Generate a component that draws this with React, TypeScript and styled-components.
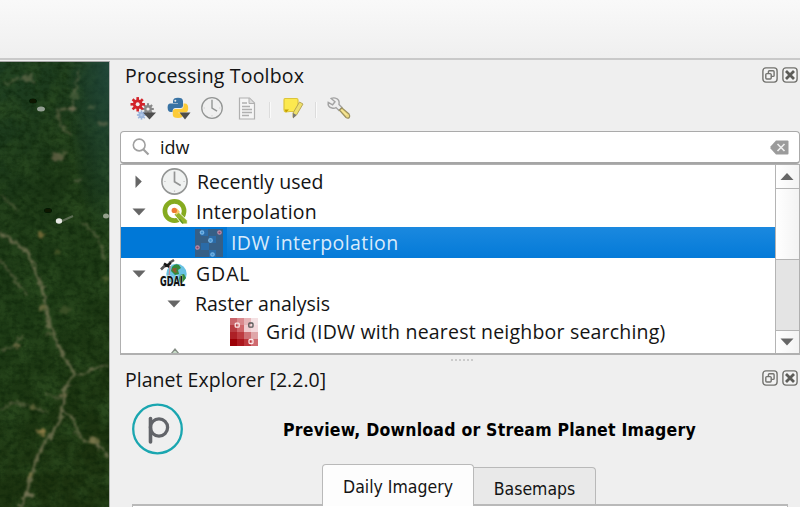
import React from 'react';
import styled, { createGlobalStyle } from 'styled-components';

const ui = '"Open Sans", "Noto Sans", sans-serif';
const tahoma = '"DejaVu Sans Condensed", "DejaVu Sans", sans-serif';

const GlobalStyle = createGlobalStyle`
  * { box-sizing: border-box; }
  body { margin: 0; background: #fff; overflow: hidden; }
  svg { display: block; flex: none; overflow: visible; }
`;

const Window = styled.div`
  width: 800px;
  height: 507px;
  display: flex;
  flex-direction: column;
  overflow: hidden;
  background: #efefef;
  color: #141414;
  font-family: ${ui};
`;

const ToolbarArea = styled.div`
  flex: none;
  height: 60px;
  background: linear-gradient(#f9f9f9, #efefef);
  border-bottom: 2px solid #c9c9c9;
`;

const Workspace = styled.div`
  flex: 1;
  display: flex;
  min-height: 0;
`;

const MapCanvas = styled.div`
  flex: none;
  width: 110px;
  height: 446px;
  margin-top: 1px;
  border-top: 1px solid #a5a5a5;
  border-right: 1px solid #b5b5b5;
  overflow: hidden;
`;

const Docks = styled.div`
  flex: 1;
  min-width: 0;
  display: flex;
  flex-direction: column;
  padding-left: 10px;
`;

const DockTitle = styled.div<{ $h: number }>`
  flex: none;
  height: ${p => p.$h}px;
  display: flex;
  align-items: center;
  padding: 0 2px 1px 5px;
`;

const DockButtons = styled.div`
  margin-left: auto;
  display: flex;
  gap: 4px;
  margin-bottom: 3px;
`;

const Label = styled.span<{ $size?: number; $space?: number }>`
  font-size: ${p => p.$size ?? 19.5}px;
  letter-spacing: ${p => p.$space ?? 0}px;
  line-height: 26px;
  white-space: nowrap;
`;

const Tools = styled.div`
  flex: none;
  height: 38px;
  display: flex;
  align-items: flex-start;
  padding: 4px 0 0 10px;
`;

const Separator = styled.i`
  width: 2px;
  height: 16px;
  margin: 5px 10px 0 10px;
  background: linear-gradient(90deg, #dcdcdc 50%, #fafafa 50%);
`;

const Gap = styled.i<{ $w: number }>`
  flex: none;
  width: ${p => p.$w}px;
`;

const SearchBox = styled.div`
  flex: none;
  height: 33px;
  display: flex;
  align-items: center;
  padding: 0 10px 0 11px;
  background: #fff;
  border: 1px solid #aaa;
  border-bottom: 2px solid #a5a5a5;
  border-radius: 4px;
`;

const SearchAction = styled.div`
  margin-left: auto;
`;

const TreeFrame = styled.div`
  flex: none;
  height: 191px;
  display: flex;
  border: 1px solid #b0b0b0;
  border-bottom-width: 2px;
  background: #fff;
`;

const TreeRows = styled.div`
  flex: 1;
  min-width: 0;
  overflow: hidden;
  padding-top: 1px;
`;

const TreeRow = styled.div<{ $h: number; $indent: number; $selected?: boolean }>`
  height: ${p => p.$h}px;
  display: flex;
  align-items: center;
  padding-left: ${p => p.$indent}px;
  padding-top: ${p => (p.$selected ? 1 : 0)}px;
  color: ${p => (p.$selected ? '#d9ebfb' : 'inherit')};
  background: ${p => (p.$selected
    ? 'linear-gradient(90deg, #0078d7 106px, transparent 106px), linear-gradient(#1b89df, #047ad8)'
    : 'none')};
`;

const ScrollBar = styled.div`
  flex: none;
  width: 24px;
  display: flex;
  flex-direction: column;
  border-left: 1px solid #b4b4b4;
  background: #e4e4e4;
`;

const ScrollPart = styled.div<{ $h: number }>`
  height: ${p => p.$h}px;
  display: flex;
  align-items: center;
  justify-content: center;
  padding-right: 1px;
  border-bottom: 1px solid #b4b4b4;
  background: linear-gradient(90deg, #fff, #f3f3f3);
`;

const ScrollEnd = styled(ScrollPart)`
  margin-top: auto;
  border-bottom: 0;
  border-top: 1px solid #b4b4b4;
`;

const Splitter = styled.div`
  flex: none;
  height: 11px;
  display: flex;
  gap: 2px;
  justify-content: center;
  padding: 4px 0 0 4px;
`;

const Dot = styled.i`
  width: 2px;
  height: 2px;
  background: #cbcbcb;
`;

const Banner = styled.div`
  flex: none;
  height: 70px;
  display: flex;
  align-items: flex-start;
  padding: 10px 0 0 12px;
`;

const BannerText = styled.strong`
  margin: 13px 0 0 99px;
  font: 700 17.5px/26px ${tahoma};
  font-stretch: condensed;
  letter-spacing: 0.22px;
  color: #000;
  white-space: nowrap;
`;

const TabBar = styled.div`
  flex: none;
  height: 40px;
  display: flex;
  align-items: flex-end;
  padding-left: 202px;
`;

const Tab = styled.div<{ $w: number; $h: number; $active?: boolean }>`
  width: ${p => p.$w}px;
  height: ${p => p.$h}px;
  display: flex;
  align-items: center;
  justify-content: center;
  padding-top: 5px;
  border: 1.5px solid #b9b9b9;
  border-bottom: 0;
  border-left-width: ${p => (p.$active ? 1.5 : 0)}px;
  border-radius: ${p => (p.$active ? '4px 4px 0 0' : '0 4px 0 0')};
  background: ${p => (p.$active ? '#fdfdfd' : '#e9e9e9')};
  font: 17.5px/24px ${tahoma};
  font-stretch: condensed;
  letter-spacing: 0;
  white-space: nowrap;
`;

const PaneEdge = styled.div`
  flex: none;
  display: grid;
  grid-template-columns: 190px 150px 1fr;
  height: 3px;
  margin: 0 12px 0 12px;
  border-left: 1px solid #b9b9b9;
  border-right: 1px solid #b9b9b9;
  background: #fff;
`;

const Edge = styled.i<{ $on?: boolean }>`
  height: 2px;
  background: ${p => (p.$on ? '#b9b9b9' : '#fdfdfd')};
`;

const roads = [
  'M0 233 Q10 238 18 245 Q29 252 32 262 L38 277 L42 288 L47 309 L49 325 L54 333 L57 343 L63 354 L68 363 L74 373 L70 381 L65 389 L64 399 L62 411 L59 422 L51 434 L44 443 L38 454 L35 464 L31 476 L28 489 L22 501 L20 507',
  'M73 375 L84 374 L92 369 L108 366',
  'M63 411 L74 419 L77 434 L86 442 L94 440 L102 450 L108 456',
  'M0 195 L8 202 L18 211',
  'M5 84 L14 80 L25 78 L34 82',
  'M78 72 L76 85 L72 97 L73 107',
  'M58 107 L60 124 L65 130 L72 135',
  'M82 223 L93 232 L101 244 L104 260',
  'M0 259 L10 272 L18 284 L28 295',
  'M0 350 L14 347 L22 335',
  'M45 392 L55 398 L63 399',
  'M0 410 L14 403 L32 407 L48 413',
];

const specks: [number, number, number, string][] = [
  [27, 78, 6, '#566344'], [72, 109, 4, '#7c765b'], [63, 109, 3, '#696b4e'], [57, 157, 7, '#666448'],
  [64, 153, 5, '#55603d'], [78, 181, 4, '#566044'], [41, 235, 4, '#80713c'], [57, 253, 3, '#56602e'],
  [103, 124, 5, '#576348'], [92, 107, 4, '#495b40'], [17, 346, 4, '#80774d'], [43, 432, 5, '#a38950'],
  [38, 432, 3, '#817644'], [42, 308, 4, '#757347'], [65, 310, 6, '#41542a'], [94, 440, 5, '#7c784c'],
  [31, 475, 3, '#8c8252'], [29, 495, 5, '#858061'], [33, 407, 4, '#65683d'], [63, 395, 4, '#716d4b'],
  [106, 278, 4, '#515f2f'], [75, 96, 5, '#465c3a'], [49, 333, 4, '#59613d'],
];

const SatelliteMap = () => (
  <svg width="109" height="445" viewBox="0 62 109 445">
    <defs>
      <linearGradient id="forest" x1="0" y1="0" x2="0.2" y2="1">
        <stop offset="0" stopColor="#1d3e22" /><stop offset=".35" stopColor="#1b3615" />
        <stop offset=".6" stopColor="#1d3a15" /><stop offset="1" stopColor="#1c320f" />
      </linearGradient>
      <radialGradient id="haze" cx="1" cy="0" r=".4">
        <stop offset="0" stopColor="#214943" stopOpacity=".75" /><stop offset="1" stopColor="#214943" stopOpacity="0" />
      </radialGradient>
      <filter id="canopy" x="0" y="0" width="100%" height="100%" colorInterpolationFilters="sRGB">
        <feTurbulence type="fractalNoise" baseFrequency=".05 .04" numOctaves="5" seed="8" />
        <feColorMatrix values="0 0 0 0 .19  0 0 0 0 .32  0 0 0 0 .14  2.2 0 0 0 -.8" />
      </filter>
      <filter id="shade" x="0" y="0" width="100%" height="100%" colorInterpolationFilters="sRGB">
        <feTurbulence type="fractalNoise" baseFrequency=".16 .2" numOctaves="3" seed="23" />
        <feColorMatrix values="0 0 0 0 .03  0 0 0 0 .12  0 0 0 0 .02  1.8 0 0 0 -.7" />
      </filter>
      <filter id="rough" x="-20%" y="-5%" width="140%" height="110%" colorInterpolationFilters="sRGB">
        <feTurbulence type="fractalNoise" baseFrequency=".2" numOctaves="2" seed="4" result="n" />
        <feDisplacementMap in="SourceGraphic" in2="n" scale="8" xChannelSelector="R" yChannelSelector="G" />
        <feGaussianBlur stdDeviation=".9" />
      </filter>
      <filter id="soft"><feGaussianBlur stdDeviation=".7" /></filter>
    </defs>
    <rect y="62" width="109" height="445" fill="url(#forest)" />
    <rect y="62" width="109" height="445" filter="url(#canopy)" opacity=".65" />
    <rect y="62" width="109" height="445" filter="url(#shade)" opacity=".6" />
    <rect y="62" width="109" height="445" fill="url(#haze)" />
    <g filter="url(#rough)">
      {roads.map((d, i) => (
        <path key={d} d={d} fill="none" stroke="#7d7b5b" strokeWidth={i === 0 ? 3 : 2.2} opacity={i < 3 ? 0.75 : 0.5} />
      ))}
      {specks.map(([x, y, r, c]) => (
        <ellipse key={`${x}-${y}`} cx={x} cy={y} rx={r} ry={r * 0.6} fill={c} opacity=".8" />
      ))}
    </g>
    <g filter="url(#soft)">
      <ellipse cx="33" cy="101" rx="4" ry="2.5" fill="#071606" />
      <ellipse cx="48" cy="210.5" rx="4" ry="2.5" fill="#071404" />
      <ellipse cx="41" cy="109" rx="4" ry="2.5" fill="#929e91" />
      <ellipse cx="59" cy="221" rx="3.2" ry="2.7" fill="#e8e9e4" />
      <path d="M62 221 L73 216" stroke="#75806b" strokeWidth="2" opacity=".7" />
      <ellipse cx="106" cy="216" rx="3" ry="2.5" fill="#94a08c" />
    </g>
  </svg>
);

const FloatIcon = () => (
  <svg width="16" height="16" viewBox="0 0 16 16" fill="none" stroke="#73736f">
    <rect x=".9" y=".9" width="14.2" height="14.2" rx="3" strokeWidth="1.4" fill="#f3f3f3" />
    <rect x="6.4" y="3.7" width="5.7" height="5.7" rx="1" strokeWidth="1.4" />
    <rect x="3.8" y="6.6" width="5.4" height="5.4" rx="1" strokeWidth="1.4" fill="#f3f3f3" />
  </svg>
);

const CloseIcon = () => (
  <svg width="16" height="16" viewBox="0 0 16 16" fill="none" stroke="#73736f">
    <rect x=".9" y=".9" width="14.2" height="14.2" rx="3" strokeWidth="1.4" fill="#f3f3f3" />
    <path d="M4 4 12 12 M12 4 4 12" strokeWidth="2.8" stroke="#5c5c58" />
  </svg>
);

const teeth = [0, 45, 90, 135];
const Gear = ({ x, y, r, color, hole }: { x: number; y: number; r: number; color: string; hole: string }) => (
  <g transform={`translate(${x} ${y})`}>
    {teeth.map(a => <rect key={a} x={-r * 0.18} y={-r} width={r * 0.36} height={r * 2} fill={color} transform={`rotate(${a})`} />)}
    <circle r={r * 0.67} fill={color} />
    <circle r={r * 0.27} fill={hole} />
  </g>
);

const ModelsIcon = () => (
  <svg width="26" height="24" viewBox="0 0 26 24">
    <Gear x={18} y={12} r={5.8} color="#888" hole="#efefef" />
    <Gear x={11.5} y={18} r={4.6} color="#9bb5dc" hole="#b4c8e6" />
    <Gear x={7.7} y={7.3} r={7.2} color="#d2232a" hole="#efefef" />
    <path d="M13 15.5H26L19.5 22.5Z" fill="#4d4d4d" />
  </svg>
);

const PythonIcon = () => (
  <svg width="26" height="24" viewBox="0 0 26 24">
    <path d="M6 6V4.200q0-3.400 5-3.400t5 3.400v4.600q0 2.200-2.500 2.200H8.500Q5.500 11 5.500 15H4q-3.400 0-3.400-4.500T4 6.500h7V6Z" fill="#3973a4" />
    <path d="M16.500 6.500H18q3.200 0 3.200 4.500t-3.200 4.500h-6.500v.8H16v2q0 2.700-5 2.700-5.200 0-5.200-3v-3.500Q5.800 12 8.500 12h5q3 0 3-3Z" fill="#fccb38" />
    <circle cx="8.300" cy="3.800" r="1" fill="#eee" />
    <path d="M12.500 15.500H23.500L18 22.500Z" fill="#4d4d4d" />
  </svg>
);

const ClockIcon = ({ size, flat }: { size: number; flat?: boolean }) => (
  <svg width={size} height={size} viewBox="0 0 24 24" fill="none">
    <circle cx="12" cy="12" r="11.2" fill={flat ? '#efefef' : '#f0f2f1'} stroke="#939594" strokeWidth="1.4" />
    <path d="M12 3V12.200L17.5 15.500" stroke="#939594" strokeWidth="1.5" />
    <path d="M3 12h1M20 12h1M12 20v1" stroke="#bbb" />
  </svg>
);

const PageIcon = () => (
  <svg width="18" height="23" viewBox="0 0 18 23" fill="none" stroke="#b0b0b0">
    <path d="M1.500 1h10L16.500 6v16h-15Z" fill="#f5f5f5" strokeWidth="1.200" />
    <path d="M11 1v5.500h5" fill="#dcdcdc" />
    <path d="M4 6h5M4 9.500h8M4 12.500h10M4 15.500h10M4 18.500h7" strokeWidth="1.300" />
  </svg>
);

const NoteIcon = () => (
  <svg width="21" height="22" viewBox="0 0 21 22">
    <path d="M2 1.500H13.500Q15 1.500 15 3V14.500H7L2.500 15Q1 14.500 1 12.500V3Q1 1.500 2 1.500Z" fill="#fce94f" stroke="#dcc43a" strokeWidth="1.200" />
    <path d="M1.500 12.500H6L3 15.500Z" fill="#c4a000" />
    <path d="M16.500 5 20 7 13.500 18 10 20.500V16Z" fill="#eee06a" stroke="#b9a655" />
    <path d="M10 16 13.500 18 10 21.500Z" fill="#777" />
  </svg>
);

const WrenchIcon = () => (
  <svg width="24" height="23" viewBox="0 0 24 23">
    <path d="M4.200 1.500 8 4.800 5.600 7.800 1.200 5.300Q.5 10 5 11q2.300.6 4-.4l3 3 3-3-3-3Q13 2.500 8.500 1.200 6.500.5 4.200 1.500Z" fill="#eee" stroke="#a3a3a3" strokeWidth="1.400" />
    <path d="M12.500 13.200 14.800 10.800 22 17Q23.300 19 22.300 20.500 21 21.800 19 20.500Z" fill="#edda83" stroke="#9b905f" strokeWidth="1.200" />
    <path d="m14.500 13 5 5" stroke="#fff0a5" />
  </svg>
);

const SearchIcon = () => (
  <svg width="18" height="18" viewBox="0 0 18 18" fill="none" stroke="#a0a0a0">
    <circle cx="7.200" cy="7" r="5.900" strokeWidth="1.600" />
    <path d="M11.200 11.200 16.500 16.500" strokeWidth="2.200" />
  </svg>
);

const ClearIcon = () => (
  <svg width="19" height="15" viewBox="0 0 19 15">
    <path d="M6 .5H17.500Q18.500.5 18.500 1.500V13.500Q18.500 14.500 17.500 14.500H6L.5 8.500V6.500Z" fill="#9b9b9b" />
    <path d="m7.500 4 7 7m0-7-7 7" stroke="#eee" strokeWidth="1.700" />
  </svg>
);

const Arrow = ({ dir }: { dir: 'up' | 'down' | 'right' }) => (
  <svg width="14" height="14" viewBox="0 0 14 14">
    <path d={dir === 'up' ? 'M.5 10 7 3l6.500 7Z' : dir === 'down' ? 'M.5 3.500h13L7 10.500Z' : 'M3.500 .5 9.800 6.500 3.500 13Z'} fill="#666" />
  </svg>
);

const QgisIcon = () => (
  <svg width="26" height="26" viewBox="0 0 26 26">
    <circle cx="12.500" cy="12" r="9.600" fill="none" stroke="#86ab20" strokeWidth="4.600" />
    <path d="M12 15.500 16 12.500 25.300 21.500V25H19.800Z" fill="#93b42c" stroke="#fff" strokeWidth=".9" />
    <path d="m17.500 20 3.500 4.500" stroke="#54902b" strokeWidth="1.200" />
    <path d="M12 11 15 9.500 18 13 14 16Z" fill="#f4c968" />
    <circle cx="12.300" cy="11.400" r="2.700" fill="#ec7a34" />
  </svg>
);

const IdwIcon = () => (
  <svg width="28" height="28" viewBox="0 0 28 28">
    <rect width="28" height="28" fill="#365f86" />
    <path d="M6 0H13V7H6ZM14 7H21V14H14ZM14 21H21V28H14ZM6 14H14V21H6Z" fill="#2a6ba8" />
    <g fill="#3f8fd0" stroke="#74b2e4" strokeWidth="1.300">
      <circle cx="7" cy="3.500" r="1.700" /><circle cx="15.500" cy="11.500" r="1.800" /><circle cx="17.500" cy="25.500" r="1.700" />
    </g>
    <g fill="#8a4767" stroke="#b88dab" strokeWidth="1.200">
      <circle cx="24.500" cy="3.500" r="1.700" /><circle cx="2.500" cy="18.500" r="1.700" />
    </g>
  </svg>
);

const GdalLetters = styled.text`
  font: 700 14px "DejaVu Sans Condensed", "DejaVu Sans", sans-serif;
  font-stretch: condensed;
  fill: #111;
`;

const GdalIcon = () => (
  <svg width="28" height="29" viewBox="0 0 28 29">
    <circle cx="16.500" cy="15" r="10.200" fill="#69c2e3" />
    <path d="M12 8q3-4 7-2l2 3-3 2 1 4-4 1-4-4ZM20 16l4-1 2 4-4 5-4-2Z" fill="#328a3c" />
    <path d="m13 9 4 0-1 3 2 1-3 1-3-3Z" fill="#85602e" />
    <path d="M1 10.500 5 6.500M9 4 14 1" fill="none" stroke="#555" strokeWidth="2.600" />
    <path d="M4 4.500 9.500 8M5 7.500l6-3.500" stroke="#181818" strokeWidth="2.600" />
    <path d="M10 7 9 19" stroke="#c8898b" strokeWidth="1.200" />
    <GdalLetters x="0" y="27" textLength="25" lengthAdjust="spacingAndGlyphs" stroke="#dff0f5" strokeWidth="1" paintOrder="stroke">GDAL</GdalLetters>
  </svg>
);

const gridColors = [
  ['#c9646a', '#d9898d', '#e6b5b8', '#f4e1e3'],
  ['#b83b41', '#cf666a', '#f0cccf', '#f3d9dc'],
  ['#ad2026', '#bd3b40', '#ce7276', '#dfa6a9'],
  ['#9c0006', '#ac171e', '#bc353b', '#cf6a6f'],
];

const GridIcon = () => (
  <svg width="28" height="28" viewBox="0 0 28 28">
    {gridColors.map((row, y) => row.map((c, x) => <rect key={`${x}${y}`} x={x * 7} y={y * 7} width="7" height="7" fill={c} />))}
    <g fill="none" strokeWidth="1.300">
      <rect x="5.200" y="5.200" width="4" height="4" rx="1" stroke="#fbe9ea" />
      <rect x="18.800" y="5" width="4.200" height="4.200" rx="1" stroke="#555" />
      <rect x="19" y="21.500" width="4" height="4" rx="1" stroke="#fbe9ea" />
    </g>
  </svg>
);

const LeafTip = () => (
  <svg width="10" height="12" viewBox="0 0 10 12">
    <path d="M1 5 5 0 9 5V12H1Z" fill="#c7dcc8" stroke="#858d85" strokeWidth="1.300" />
  </svg>
);

const PlanetLogo = () => (
  <svg width="52" height="52" viewBox="0 0 52 52" fill="none">
    <circle cx="25.500" cy="25" r="24.300" stroke="#1aa6b0" strokeWidth="2.300" />
    <path d="M18.500 38V14.500" stroke="#626469" strokeWidth="3.600" strokeLinecap="round" />
    <circle cx="27" cy="23.500" r="8.600" stroke="#626469" strokeWidth="3.300" />
  </svg>
);

export default function App() {
  return (
    <>
      <GlobalStyle />
      <Window>
        <ToolbarArea />
        <Workspace>
          <MapCanvas><SatelliteMap /></MapCanvas>
          <Docks>
            <DockTitle $h={33}>
              <Label $space={0.18}>Processing Toolbox</Label>
              <DockButtons><FloatIcon /><CloseIcon /></DockButtons>
            </DockTitle>
            <Tools>
              <ModelsIcon /><Gap $w={11} /><PythonIcon /><Gap $w={8} />
              <ClockIcon size={22} flat /><Gap $w={15} /><PageIcon />
              <Gap $w={3} /><Separator /><Gap $w={2} /><NoteIcon />
              <Gap $w={1} /><Separator /><WrenchIcon />
            </Tools>
            <SearchBox>
              <SearchIcon />
              <Gap $w={10} />
              <Label $size={18}>idw</Label>
              <SearchAction><ClearIcon /></SearchAction>
            </SearchBox>
            <TreeFrame>
              <TreeRows>
                <TreeRow $h={31} $indent={11}>
                  <Arrow dir="right" /><Gap $w={15} /><ClockIcon size={27} /><Gap $w={9} /><Label $space={0.03}>Recently used</Label>
                </TreeRow>
                <TreeRow $h={30} $indent={11}>
                  <Arrow dir="down" /><Gap $w={16} /><QgisIcon /><Gap $w={8} /><Label $space={0.2}>Interpolation</Label>
                </TreeRow>
                <TreeRow $h={31} $indent={74} $selected>
                  <IdwIcon /><Gap $w={8} /><Label $space={0.42}>IDW interpolation</Label>
                </TreeRow>
                <TreeRow $h={31} $indent={11}>
                  <Arrow dir="down" /><Gap $w={14} /><GdalIcon /><Gap $w={8} /><Label $space={0.9}>GDAL</Label>
                </TreeRow>
                <TreeRow $h={29} $indent={46}>
                  <Arrow dir="down" /><Gap $w={14} /><Label>Raster analysis</Label>
                </TreeRow>
                <TreeRow $h={28} $indent={109}>
                  <GridIcon /><Gap $w={8} /><Label $space={0.2}>Grid (IDW with nearest neighbor searching)</Label>
                </TreeRow>
                <TreeRow $h={17} $indent={49}><LeafTip /></TreeRow>
              </TreeRows>
              <ScrollBar>
                <ScrollPart $h={24}><Arrow dir="up" /></ScrollPart>
                <ScrollPart $h={71} />
                <ScrollEnd $h={23}><Arrow dir="down" /></ScrollEnd>
              </ScrollBar>
            </TreeFrame>
            <Splitter>{[0, 1, 2, 3, 4, 5].map(i => <Dot key={i} />)}</Splitter>
            <DockTitle $h={28}>
              <Label $space={0.03}>Planet Explorer [2.2.0]</Label>
              <DockButtons><FloatIcon /><CloseIcon /></DockButtons>
            </DockTitle>
            <Banner>
              <PlanetLogo />
              <BannerText>Preview, Download or Stream Planet Imagery</BannerText>
            </Banner>
            <TabBar>
              <Tab $w={152} $h={40} $active>Daily Imagery</Tab>
              <Tab $w={122} $h={37}>Basemaps</Tab>
            </TabBar>
            <PaneEdge><Edge $on /><Edge /><Edge $on /></PaneEdge>
          </Docks>
        </Workspace>
      </Window>
    </>
  );
}
